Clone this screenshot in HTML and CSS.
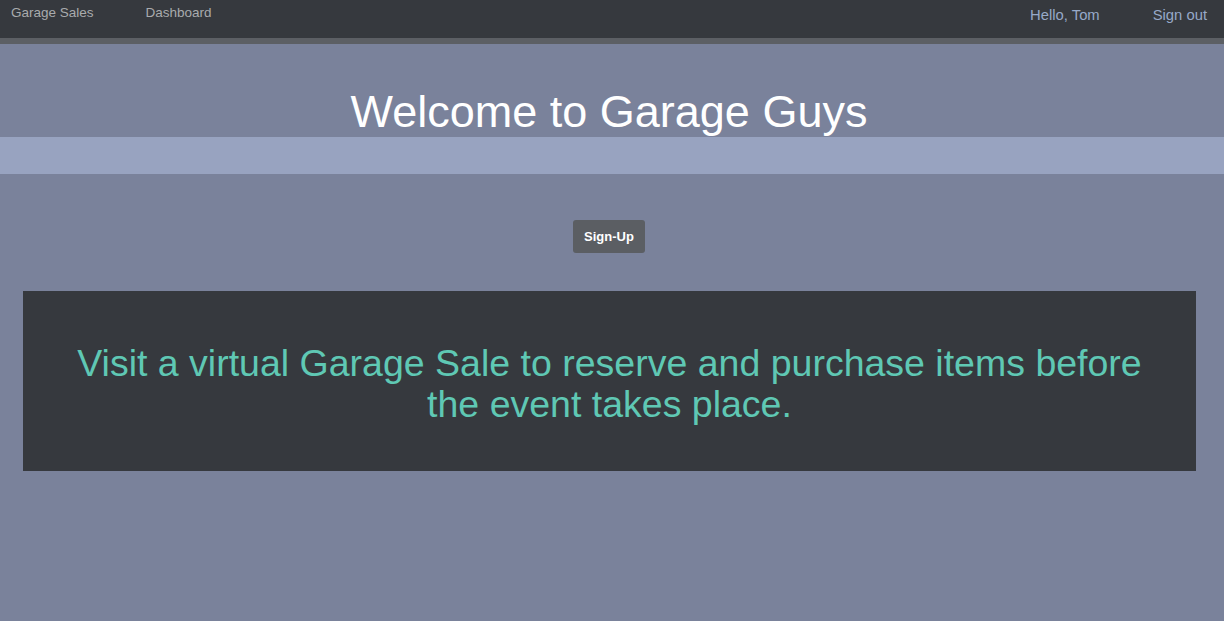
FILE: index.html
```html
<!DOCTYPE html>
<html>
<head>
<meta charset="utf-8">
<link rel="stylesheet" href="styles.css">
</head>
<body>
<nav class="nav">
  <div class="nav-left">
    <a class="nav-link" href="#">Garage Sales</a>
    <a class="nav-link" href="#">Dashboard</a>
  </div>
  <div class="nav-right">
    <span class="nav-user">Hello, Tom</span>
    <a class="nav-signout" href="#">Sign out</a>
  </div>
</nav>
<div class="nav-strip"></div>
<main class="main">
  <h1 class="title">Welcome to Garage Guys</h1>
  <div class="band"></div>
  <div class="actions">
    <button class="btn">Sign-Up</button>
  </div>
  <section class="promo">
    <p class="promo-text">Visit a virtual Garage Sale to reserve and purchase items before the event takes place.</p>
  </section>
</main>
</body>
</html>
```
FILE: styles.css
```css
* { box-sizing: border-box; }
html, body { margin: 0; padding: 0; }
body {
  font-family: "Liberation Sans", Arial, Helvetica, sans-serif;
  background: #7a829b;
  height: 621px;
  overflow: hidden;
}
.nav {
  height: 38px;
  background: #36393e;
  display: flex;
  justify-content: space-between;
}
.nav-left {
  display: flex;
  gap: 52px;
  padding: 5px 0 0 11px;
}
.nav-right {
  display: flex;
  gap: 53px;
  padding: 7px 17px 0 0;
}
.nav-link {
  color: #a9abad;
  font-size: 13.5px;
  text-decoration: none;
}
.nav-user, .nav-signout {
  color: #97a9c9;
  font-size: 14.8px;
  text-decoration: none;
}
.nav-strip {
  height: 6px;
  background: #5c5f64;
}
.title {
  margin: 0;
  padding: 42px 6px 0 0;
  text-align: center;
  color: #ffffff;
  font-weight: normal;
  font-size: 45px;
  line-height: 51px;
}
.band {
  height: 37px;
  background: #98a3c0;
}
.actions {
  display: flex;
  justify-content: center;
  padding: 46px 6px 0 0;
}
.btn {
  width: 72px;
  height: 33px;
  border: none;
  border-radius: 3px;
  background: #5b5e63;
  color: #ffffff;
  font-family: "Liberation Sans", Arial, sans-serif;
  font-weight: bold;
  font-size: 13px;
  padding: 0;
}
.promo {
  margin: 38px 28px 0 23px;
  height: 180px;
  background: #36393e;
  display: flex;
  align-items: center;
  justify-content: center;
  padding-top: 6px;
}
.promo-text {
  margin: 0;
  padding: 0 40px;
  text-align: center;
  color: #5fc8b4;
  font-size: 37.5px;
  line-height: 41px;
}
```
